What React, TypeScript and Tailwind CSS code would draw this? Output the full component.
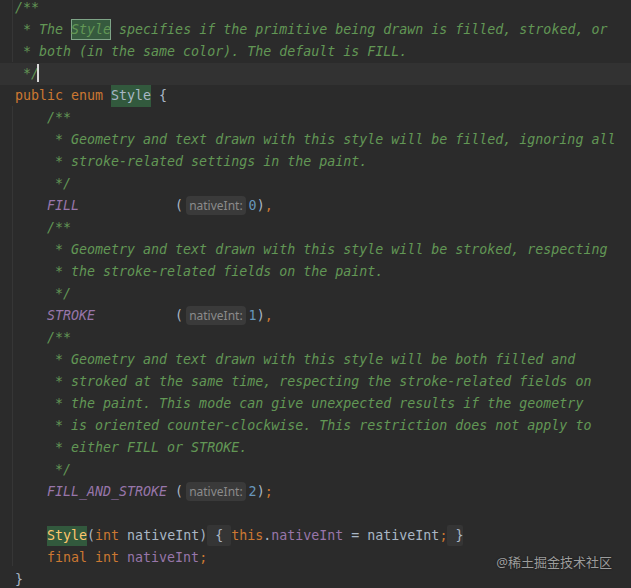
import React from "react";

const C = ({ children }: { children: React.ReactNode }) => (
  <span className="italic text-[#629755]">{children}</span>
);
const K = ({ children }: { children: React.ReactNode }) => (
  <span className="text-[#cc7832]">{children}</span>
);
const P = ({ children }: { children: React.ReactNode }) => (
  <span className="text-[#a9b7c6]">{children}</span>
);
const E = ({ children }: { children: React.ReactNode }) => (
  <span className="italic text-[#9876aa]">{children}</span>
);
const F = ({ children }: { children: React.ReactNode }) => (
  <span className="text-[#9876aa]">{children}</span>
);
const N = ({ children }: { children: React.ReactNode }) => (
  <span className="text-[#6897bb]">{children}</span>
);

const Hint = () => (
  <span className="inline-block align-middle ml-[3px] mr-[3px] h-[19px] leading-[19px] px-[3px] rounded-[4px] bg-[#3a3a3a] text-[#8b8b8b] text-[12px] not-italic [font-family:'Noto_Sans',sans-serif] -mt-[2px]">
    nativeInt:
  </span>
);

const Row = ({
  children,
  className = "",
}: {
  children?: React.ReactNode;
  className?: string;
}) => (
  <div className={`h-[22px] leading-[22px] whitespace-pre pl-[15px] ${className}`}>
    {children}
  </div>
);

export default function App() {
  return (
    <div className="relative w-[631px] h-[588px] overflow-hidden bg-[#2b2b2b] [font-family:'DejaVu_Sans_Mono',monospace] text-[13.3px]">
      <div className="absolute left-[12px] top-0 h-[62px] w-px bg-[#363636]" />
      <div className="absolute left-[12px] top-[106px] h-[460px] w-px bg-[#363636]" />
      <div className="flex flex-col -mt-[3px]">
        <Row>
          <C>/**</C>
        </Row>
        <Row>
          <C>{" * The "}</C>
          <span className="inline-block h-[21px] leading-[21px] bg-[#365a3e] ring-1 ring-inset ring-[#7fa487] italic text-[#629755]">
            Style
          </span>
          <C>{" specifies if the primitive being drawn is filled, stroked, or"}</C>
        </Row>
        <Row>
          <C>{" * both (in the same color). The default is FILL."}</C>
        </Row>
        <Row className="bg-[#323232]">
          <C>{" */"}</C>
          <span className="inline-block align-middle -ml-[2px] -mt-[2px] w-[2px] h-[18px] bg-[#d8d8d8]" />
        </Row>
        <Row>
          <K>{"public enum "}</K>
          <span className="inline-block h-[22px] bg-[#32593d] text-[#a9b7c6]">Style</span>
          <P>{" {"}</P>
        </Row>
        <Row>
          <C>{"    /**"}</C>
        </Row>
        <Row>
          <C>{"     * Geometry and text drawn with this style will be filled, ignoring all"}</C>
        </Row>
        <Row>
          <C>{"     * stroke-related settings in the paint."}</C>
        </Row>
        <Row>
          <C>{"     */"}</C>
        </Row>
        <Row>
          <E>{"    FILL"}</E>
          <P>{"            ("}</P>
          <Hint />
          <N>0</N>
          <P>)</P>
          <K>,</K>
        </Row>
        <Row>
          <C>{"    /**"}</C>
        </Row>
        <Row>
          <C>{"     * Geometry and text drawn with this style will be stroked, respecting"}</C>
        </Row>
        <Row>
          <C>{"     * the stroke-related fields on the paint."}</C>
        </Row>
        <Row>
          <C>{"     */"}</C>
        </Row>
        <Row>
          <E>{"    STROKE"}</E>
          <P>{"          ("}</P>
          <Hint />
          <N>1</N>
          <P>)</P>
          <K>,</K>
        </Row>
        <Row>
          <C>{"    /**"}</C>
        </Row>
        <Row>
          <C>{"     * Geometry and text drawn with this style will be both filled and"}</C>
        </Row>
        <Row>
          <C>{"     * stroked at the same time, respecting the stroke-related fields on"}</C>
        </Row>
        <Row>
          <C>{"     * the paint. This mode can give unexpected results if the geometry"}</C>
        </Row>
        <Row>
          <C>{"     * is oriented counter-clockwise. This restriction does not apply to"}</C>
        </Row>
        <Row>
          <C>{"     * either FILL or STROKE."}</C>
        </Row>
        <Row>
          <C>{"     */"}</C>
        </Row>
        <Row>
          <E>{"    FILL_AND_STROKE"}</E>
          <P>{" ("}</P>
          <Hint />
          <N>2</N>
          <P>)</P>
          <K>;</K>
        </Row>
        <Row />
        <Row>
          <span>{"    "}</span>
          <span className="inline-block h-[20px] leading-[20px] bg-[#32593d] text-[#ffc66d]">Style</span>
          <P>(</P>
          <K>int</K>
          <P>{" nativeInt)"}</P>
          <span className="inline-block h-[21px] leading-[21px] rounded-[2px] bg-[#353535] text-[#a9b7c6] align-top">{" { "}</span>
          <K>this</K>
          <P>.</P>
          <F>nativeInt</F>
          <P>{" = nativeInt"}</P>
          <K>;</K>
          <span className="inline-block h-[21px] leading-[21px] rounded-[2px] bg-[#353535] text-[#a9b7c6] align-top">{" }"}</span>
        </Row>
        <Row>
          <K>{"    final int "}</K>
          <F>nativeInt</F>
          <K>;</K>
        </Row>
        <Row>
          <P>{"}"}</P>
        </Row>
      </div>
      <div className="absolute right-[19px] top-[553px] text-[13px] leading-[18px] text-[#9c9c9c] [font-family:'Noto_Sans','Noto_Sans_CJK_SC',sans-serif] [text-shadow:0_0_2px_rgba(0,0,0,0.6)]">
        @稀土掘金技术社区
      </div>
    </div>
  );
}
